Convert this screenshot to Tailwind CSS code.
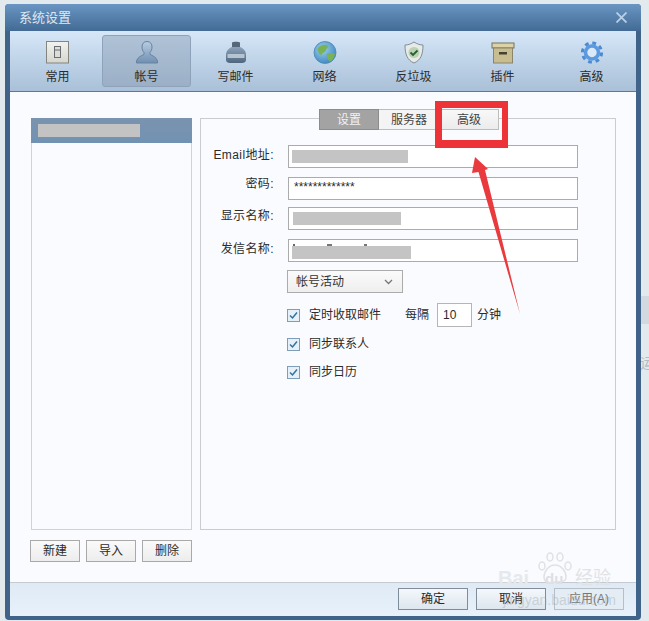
<!DOCTYPE html>
<html lang="zh">
<head>
    <meta charset="UTF-8">
    <title>系统设置</title>
    <script src="https://cdn.jsdelivr.net/npm/@tailwindcss/browser@4"></script>
</head>
<body class="relative w-[649px] h-[621px] overflow-hidden bg-[#e3eaed] font-['Liberation_Sans','Noto_Sans_CJK_SC',sans-serif] text-[12px] text-[#2b2b2b]">
    <!-- what shows of the desktop behind, right of the window -->
    <div class="absolute left-[641px] top-[296px] w-[8px] h-[28px] bg-[#d3dadf]"></div>
    <span class="absolute left-[640px] top-[353px] text-[14px] text-[#b4bcc3]">运</span>

    <div class="absolute left-[5px] top-[4px] w-[636px] h-[616px] rounded-[4px] bg-[#3f6389] flex flex-col px-[5px] pb-[4px]">
        <!-- title -->
        <div class="h-[27px] shrink-0 -mx-[5px] px-[14px] rounded-t-[4px] bg-gradient-to-b from-[#6b96c3] to-[#426a94] flex items-center justify-between text-[13px] text-[#dfe8f2]">
            <span>系统设置</span>
            <svg width="11" height="11" viewBox="0 0 11 11"><path d="M.5.5l10 10M10.500.5l-10 10" stroke="#b9cfe4" stroke-width="1.800"/></svg>
        </div>
        <!-- toolbar -->
        <div class="h-[61px] shrink-0 flex pl-[3px] pt-[4px] bg-gradient-to-b from-[#d6e7f8] to-[#a9c0d8] border-b border-[#5f7891]">
            <div class="w-[89px] h-[52px] pt-[6px] flex flex-col items-center">
                <svg width="24" height="24" viewBox="0 0 24 24"><defs><linearGradient id="box" x1="0" y1="0" x2="0" y2="1"><stop offset="0" stop-color="#f2f3ef"/><stop offset="1" stop-color="#d4d6cf"/></linearGradient></defs><rect x=".5" y=".5" width="22" height="21.500" fill="url(#box)" stroke="#85857f"/><rect x="8.500" y="5.500" width="6" height="11" fill="#dcdcd8" stroke="#6a6e72"/><path d="M9 9h5" stroke="#6a6e72"/></svg>
                <span class="leading-[18px] mt-[3px]">常用</span>
            </div>
            <div class="w-[89px] h-[52px] pt-[5px] rounded-[3px] bg-gradient-to-b from-[#afc2d6] to-[#9bafc6] border border-[#8ea3ba] flex flex-col items-center">
                <svg width="24" height="24" viewBox="0 0 24 24"><defs><linearGradient id="usr" x1="0" y1="0" x2="0" y2="1"><stop offset="0" stop-color="#b9cde2"/><stop offset="1" stop-color="#6f8fb3"/></linearGradient></defs><path d="M12 .5c3.500 0 5 2.500 5 5.500 0 2.500-1 4.500-2 5.500v2c2 1 6.500 2.500 7.500 6.500v2H1.500v-2c1-4 5.500-5.500 7.500-6.500v-2C8 10.500 7 8.500 7 6c0-3 1.500-5.500 5-5.500z" fill="url(#usr)" stroke="#68839f"/></svg>
                <span class="leading-[18px] mt-[3px]">帐号</span>
            </div>
            <div class="w-[89px] h-[52px] pt-[6px] flex flex-col items-center">
                <svg width="24" height="24" viewBox="0 0 24 24"><defs><linearGradient id="ink" x1="0" y1="0" x2="0" y2="1"><stop offset="0" stop-color="#8da3bb"/><stop offset="1" stop-color="#4f667f"/></linearGradient></defs><path d="M8 1.500c1-1 7-1 8 0V7H8z" fill="#56677a"/><path d="M8 6h8c3.500 1.500 6 4 6 8v5c0 2-2 3-4 3H6c-2 0-4-1-4-3v-5c0-4 2.500-6.500 6-8z" fill="url(#ink)"/><rect x="3.500" y="13" width="17" height="4" fill="#c9d4df" opacity=".8"/></svg>
                <span class="leading-[18px] mt-[3px]">写邮件</span>
            </div>
            <div class="w-[89px] h-[52px] pt-[6px] flex flex-col items-center">
                <svg width="24" height="24" viewBox="0 0 24 24"><defs><radialGradient id="globe" cx=".4" cy=".35" r=".7"><stop offset="0" stop-color="#9fd0ee"/><stop offset="1" stop-color="#3c86bf"/></radialGradient></defs><circle cx="12" cy="11.500" r="11" fill="url(#globe)" stroke="#4a86b3" stroke-width=".8"/><path d="M5 7c3-3.500 8-4 10-2 1 2-2 2-2 4s-3 2-4 4-3 0-3.500-2S4 9 5 7zM14 12.500c3-1 6-.5 8 .5-1 4.500-3 7-5.500 7.500-1.500-2.500-3.500-5.500-2.500-8z" fill="#79b356"/></svg>
                <span class="leading-[18px] mt-[3px]">网络</span>
            </div>
            <div class="w-[89px] h-[52px] pt-[6px] flex flex-col items-center">
                <svg width="24" height="24" viewBox="0 0 24 24"><path d="M12 1c3 2 6 3 9 3 0 9-2 15-9 18C5 19 3 13 3 4c3 0 6-1 9-3z" fill="#e6ebe7" stroke="#808c94"/><circle cx="12" cy="11.500" r="5.500" fill="#bcd0b4"/><path d="M8.500 11.500l2.500 2.500 4.500-4.500" fill="none" stroke="#24622f" stroke-width="1.800"/></svg>
                <span class="leading-[18px] mt-[3px]">反垃圾</span>
            </div>
            <div class="w-[89px] h-[52px] pt-[6px] flex flex-col items-center">
                <svg width="24" height="24" viewBox="0 0 24 24"><rect x="1" y="2" width="22" height="5" fill="#dcd2a8" stroke="#77725a"/><rect x="2.500" y="7" width="19" height="15" fill="#c8bd90" stroke="#8a8468"/><rect x="8" y="11" width="8" height="2.500" fill="#45432f"/></svg>
                <span class="leading-[18px] mt-[3px]">插件</span>
            </div>
            <div class="w-[89px] h-[52px] pt-[6px] flex flex-col items-center">
                <svg width="24" height="24" viewBox="0 0 24 24"><circle cx="12" cy="11.500" r="9.600" fill="none" stroke="#4a8bd3" stroke-width="3" stroke-dasharray="3.800 3.740"/><circle cx="12" cy="11.500" r="6.500" fill="#dbe9f7" stroke="#5b9ae0" stroke-width="3.600"/></svg>
                <span class="leading-[18px] mt-[3px]">高级</span>
            </div>
        </div>
        <!-- content -->
        <div class="flex-1 bg-[#fafbff] flex flex-col border-b border-[#c5cbd1]">
            <div class="flex gap-[8px] pl-[21px] pt-[26px]">
                <div class="w-[161px] h-[412px] border border-t-0 border-[#cfd2d6]">
                    <div class="h-[25px] -mx-px bg-gradient-to-b from-[#7a93ae] to-[#7292b3] pl-[7px] pt-[6px]">
                        <div class="w-[102px] h-[13px] bg-[#c3c3c3]"></div>
                    </div>
                </div>
                <div class="relative w-[416px] h-[412px] border border-[#c9cdd1] pl-[87px] pt-[26px]">
                    <div class="absolute left-[118px] -top-[10px] flex h-[21px]">
                        <div class="w-[60px] bg-[#a3a3a3] border border-[#8c8c8c] text-[#f2f2f2] flex items-center justify-center">设置</div>
                        <div class="w-[60px] bg-[#f4f4f4] border-y border-[#bdbdbd] flex items-center justify-center text-[#444]">服务器</div>
                        <div class="w-[60px] bg-gradient-to-b from-[#f8f8f8] to-[#ececec] border border-[#bdbdbd] flex items-center justify-center text-[#444]">高级</div>
                    </div>
                    <div class="flex flex-col w-[290px]">
                        <div class="relative h-[23px] border border-[#ababab] bg-white">
                            <span class="absolute right-[303px] top-0 tracking-[0.4px] whitespace-nowrap">Email地址:</span>
                            <div class="w-[116px] h-[13px] mt-[4px] ml-[3px] bg-[#c4c4c4]"></div>
                        </div>
                        <div class="relative h-[23px] mt-[9px] border border-[#ababab] bg-white pl-[5px] leading-[19px]">
                            <span class="absolute right-[303px] -top-[3px] tracking-[0.4px] whitespace-nowrap">密码:</span>
                            *************
                        </div>
                        <div class="relative h-[23px] mt-[7px] border border-[#ababab] bg-white">
                            <span class="absolute right-[303px] -top-px tracking-[0.4px] whitespace-nowrap">显示名称:</span>
                            <div class="w-[108px] h-[13px] mt-[4px] ml-[4px] bg-[#c4c4c4]"></div>
                        </div>
                        <div class="relative h-[23px] mt-[9px] border border-[#ababab] bg-white">
                            <span class="absolute right-[303px] top-0 tracking-[0.4px] whitespace-nowrap">发信名称:</span>
                            <div class="flex gap-[32px] ml-[4px] pt-[4px] h-[6px]"><i class="w-[2px] h-[2px] bg-[#666]"></i><i class="w-[5px] h-[2px] bg-[#777]"></i><i class="w-[3px] h-[2px] bg-[#777]"></i></div>
                            <div class="w-[119px] h-[13px] ml-[3px] bg-[#c4c4c4]"></div>
                        </div>
                    </div>
                    <div class="w-[116px] h-[23px] mt-[8px] -ml-px border border-[#ababab] bg-gradient-to-b from-[#fafafa] to-[#efefef] flex items-center justify-between pl-[8px] pr-[9px] text-[#333]">
                        <span>帐号活动</span>
                        <svg width="9" height="6" viewBox="0 0 9 6"><path d="M1 1l3.500 3.500L8 1" fill="none" stroke="#777" stroke-width="1.300"/></svg>
                    </div>
                    <div class="flex items-center h-[24px] mt-[10px] -ml-px">
                        <span class="w-[13px] h-[13px] border border-[#7f9db9] bg-[#e6f0f8] flex items-center justify-center"><svg width="9" height="9" viewBox="0 0 9 9"><path d="M1 4.500l2.500 2.500L8 1.500" fill="none" stroke="#33719e" stroke-width="1.500"/></svg></span>
                        <span class="ml-[9px]">定时收取邮件</span>
                        <span class="ml-[24px]">每隔</span>
                        <span class="w-[35px] h-[24px] ml-[8px] border border-[#b5b5b5] bg-white pl-[5px] leading-[22px]">10</span>
                        <span class="ml-[5px]">分钟</span>
                    </div>
                    <div class="flex items-center h-[16px] mt-[9px] -ml-px">
                        <span class="w-[13px] h-[13px] border border-[#7f9db9] bg-[#e6f0f8] flex items-center justify-center"><svg width="9" height="9" viewBox="0 0 9 9"><path d="M1 4.500l2.500 2.500L8 1.500" fill="none" stroke="#33719e" stroke-width="1.500"/></svg></span>
                        <span class="ml-[9px]">同步联系人</span>
                    </div>
                    <div class="flex items-center h-[16px] mt-[12px] -ml-px">
                        <span class="w-[13px] h-[13px] border border-[#7f9db9] bg-[#e6f0f8] flex items-center justify-center"><svg width="9" height="9" viewBox="0 0 9 9"><path d="M1 4.500l2.500 2.500L8 1.500" fill="none" stroke="#33719e" stroke-width="1.500"/></svg></span>
                        <span class="ml-[9px]">同步日历</span>
                    </div>
                </div>
            </div>
            <div class="flex gap-[6px] pl-[20px] pt-[10px]">
                <button class="w-[50px] h-[22px] border border-[#a9a9a9] bg-gradient-to-b from-[#fafafa] to-[#ededed]">新建</button>
                <button class="w-[50px] h-[22px] border border-[#a9a9a9] bg-gradient-to-b from-[#fafafa] to-[#ededed]">导入</button>
                <button class="w-[50px] h-[22px] border border-[#a9a9a9] bg-gradient-to-b from-[#fafafa] to-[#ededed]">删除</button>
            </div>
        </div>
        <!-- footer -->
        <div class="h-[33px] shrink-0 bg-gradient-to-b from-[#dfeaf5] to-[#e8f1fa] flex justify-end gap-[8px] pr-[12px] pt-[5px]">
            <button class="w-[70px] h-[22px] border border-[#7f8c99] bg-gradient-to-b from-[#f4f8fb] to-[#dde6ee]">确定</button>
            <button class="w-[70px] h-[22px] border border-[#7f8c99] bg-gradient-to-b from-[#f4f8fb] to-[#dde6ee]">取消</button>
            <button class="w-[70px] h-[22px] border border-[#b4bfca] bg-[#e4ecf4] text-[#777]">应用(A)</button>
        </div>
    </div>
    <!-- red annotation -->
    <div class="absolute left-[435px] top-[101px] w-[73px] h-[47px] border-[#ee3338] border-t-[7px] border-l-[7px] border-r-[6px] border-b-[8px]"></div>
    <svg class="absolute left-0 top-0" width="649" height="621" viewBox="0 0 649 621"><path d="M475 157L488 169 485 170 520 314 478.500 172 472 173z" fill="#e93a3e"/></svg>
    <!-- baidu watermark -->
    <div class="absolute left-[498px] top-[568px] text-[20px] font-bold leading-none text-[#e6e9ec] whitespace-nowrap">Bai</div>
    <div class="absolute left-[545px] top-[571px] text-[15px] font-bold leading-none text-[#dcdfe3] whitespace-nowrap">du</div>
    <div class="absolute left-[575px] top-[569px] text-[18px] leading-none text-[#e0e3e6] whitespace-nowrap">经验</div>
    <span class="absolute left-[503px] top-[590px] text-[14px] text-[#9ba5ae]/40 whitespace-nowrap">jingyan.baidu.com</span>
    <svg class="absolute left-[537px] top-[551px]" width="36" height="35" viewBox="0 0 36 35"><g fill="none" stroke="#dfe1e4" stroke-width="1.500"><ellipse cx="5" cy="15" rx="3" ry="4"/><ellipse cx="13" cy="6" rx="3" ry="4"/><ellipse cx="23" cy="6" rx="3" ry="4"/><ellipse cx="31" cy="15" rx="3" ry="4"/><path d="M18 14c-6 0-11 6-11 12s6 6 11 5 11 1 11-5-5-12-11-12z"/></g></svg>
</body>
</html>
